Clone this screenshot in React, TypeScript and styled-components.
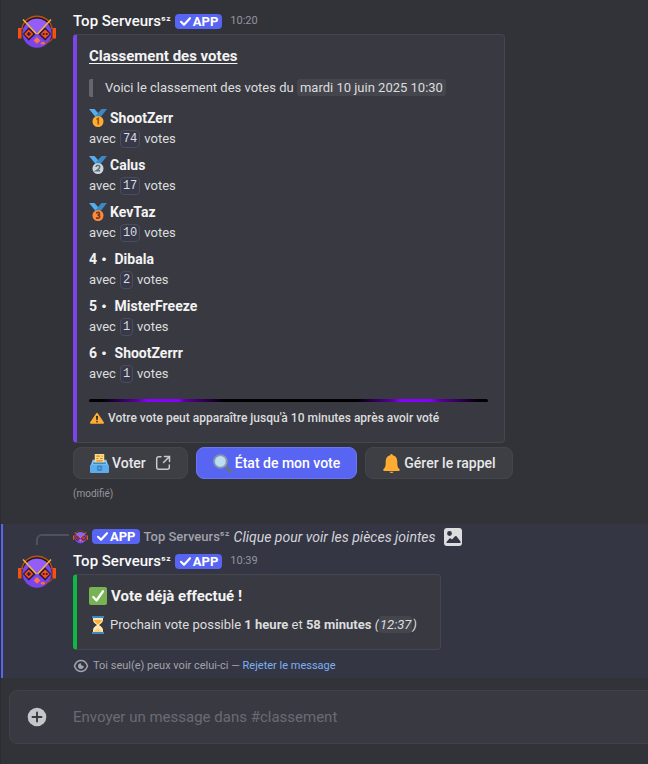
import React from "react";
import styled, { createGlobalStyle, css } from "styled-components";

const GlobalStyle = createGlobalStyle`
  * { box-sizing: border-box; }
  body {
    margin: 0;
    background: #323339;
    color: #dcddde;
    font-family: Roboto, Inter, "Noto Sans CJK JP", sans-serif;
    font-size: 13px;
    line-height: 20px;
  }
  svg { display: block; flex: none; }
`;

const Page = styled.main`
  min-height: 100vh;
  overflow: hidden;
  border-left: 1px solid #2b2c31;
  padding-bottom: 20px;
`;

const Message = styled.article<{ $mentioned?: boolean }>`
  display: grid;
  grid-template-columns: 72px minmax(0, 1fr);
  padding: 10px 16px 23px 0;
  ${(p) =>
    p.$mentioned &&
    css`
      padding: 4px 16px 4px 0;
      background: #343643;
      box-shadow: inset 2px 0 0 #5865f2;
    `}
`;

const AvatarSlot = styled.div`
  padding: 4px 0 0 17px;
`;

const ReplyRow = styled.div`
  grid-column: 1 / -1;
  display: flex;
  align-items: center;
  height: 17px;
  margin-bottom: 5px;
`;

const ReplySpine = styled.div`
  align-self: flex-end;
  width: 33px;
  height: 11px;
  margin: 0 4px 0 35px;
  border: solid #50515b;
  border-width: 2px 0 0 2px;
  border-top-left-radius: 6px;
`;

const ReplyName = styled.span`
  margin: 0 4px;
  color: #a2a3ab;
  font-size: 13px;
  font-weight: 500;
`;

const ReplyPreview = styled.button`
  display: flex;
  align-items: center;
  gap: 8px;
  padding: 0;
  border: 0;
  background: none;
  color: #d3d4da;
  font: italic 14px/18px Roboto, sans-serif;
  cursor: pointer;
`;

const MessageHeader = styled.header`
  display: flex;
  align-items: center;
  height: 22px;
  margin-bottom: 2px;
`;

const Author = styled.span`
  color: #fbfbfb;
  font-size: 15px;
  font-weight: 500;
  line-height: 22px;
`;

const Suffix = styled.span`
  font-size: 12px;
  line-height: 1;
`;

const Badge = styled.span`
  display: inline-flex;
  align-items: center;
  gap: 1px;
  height: 15px;
  margin-left: 4px;
  padding: 0 4px;
  border-radius: 4px;
  background: #5865f2;
  color: #fff;
  font-size: 13px;
  font-weight: 700;
  line-height: 15px;
`;

const Stamp = styled.time`
  margin-left: 8px;
  color: #94959c;
  font-size: 11px;
`;

const Embed = styled.section<{ $accent: string; $width: number }>`
  max-width: ${(p) => p.$width}px;
  padding: 10px 16px 14px 12px;
  border: 1px solid #46474e;
  border-left: 4px solid ${(p) => p.$accent};
  border-radius: 4px;
  background: #393a41;
`;

const EmbedTitle = styled.h2<{ $underlined?: boolean }>`
  display: flex;
  align-items: center;
  gap: 4px;
  margin: 0;
  color: #f3f3f4;
  font-size: 15px;
  font-weight: 700;
  line-height: 22px;
  text-decoration: ${(p) => (p.$underlined ? "underline" : "none")};
  text-underline-offset: 2px;
`;

const Quote = styled.blockquote`
  margin: 12px 0 11px;
  padding-left: 12px;
  border-left: 4px solid #65666e;
  border-radius: 2px;
  line-height: 18px;
`;

const Timestamp = styled.time`
  padding: 1px 3px;
  border-radius: 3px;
  background: #45464d;
  i > & { padding: 1px; }
`;

const Ranking = styled.dl`
  display: grid;
  gap: 6px;
  margin: 0;
`;

const Player = styled.dt`
  display: flex;
  align-items: center;
  gap: 3px;
  height: 20px;
  color: #f3f3f4;
  font-size: 14px;
  font-weight: 700;
  white-space: pre;
`;

const Votes = styled.dd`
  display: flex;
  align-items: center;
  gap: 4px;
  height: 21px;
  margin: 0;
  font-size: 13px;
`;

const Count = styled.code`
  padding: 0 2px;
  border: 1px solid #4b4c5c;
  border-radius: 4px;
  background: #37384a;
  font: 12px/16px "Liberation Mono", monospace;
`;

const Separator = styled.div`
  height: 3px;
  margin-top: 15px;
  border-radius: 2px;
  background: linear-gradient(
    90deg,
    #000 3%, #5a009c 12%, #8800ff 14.5%, #8800ff 22.5%, #5a009c 24%, #000 34%,
    #000 67%, #5a009c 76%, #8800ff 78%, #8800ff 85.5%, #5a009c 88%, #000 98%
  );
`;

const EmbedFooter = styled.footer`
  display: flex;
  align-items: center;
  gap: 4px;
  margin: 8px 0 2px;
  padding-left: 1px;
  color: #dcddde;
  font-size: 12px;
  font-weight: 500;
  line-height: 16px;
`;

const Actions = styled.div`
  display: flex;
  flex-wrap: wrap;
  gap: 8px;
  margin-top: 4px;
`;

const action = css<{ $primary?: boolean }>`
  display: flex;
  align-items: center;
  gap: 3px;
  height: 32px;
  padding: 0 16px;
  border: 1px solid ${(p) => (p.$primary ? "#6a76f4" : "#45464c")};
  border-radius: 8px;
  background: ${(p) => (p.$primary ? "#5865f2" : "#3e3f45")};
  color: ${(p) => (p.$primary ? "#fff" : "#e8e8ea")};
  font: 500 14px/20px Roboto, sans-serif;
  text-decoration: none;
  cursor: pointer;
`;

const ActionButton = styled.button<{ $primary?: boolean }>`
  ${action}
`;

const ActionLink = styled.a<{ $primary?: boolean }>`
  ${action}
`;

const ActionLabel = styled.span`
  &:not(:last-child) { padding-right: 6px; }
`;

const Edited = styled.div`
  margin-top: 8px;
  color: #94959c;
  font-size: 10px;
  line-height: 14px;
`;

const Remaining = styled.p`
  display: flex;
  align-items: center;
  gap: 3px;
  margin: 8px 0 0;
`;

const Ephemeral = styled.p`
  display: flex;
  align-items: center;
  gap: 4px;
  margin: 8px 0 0;
  color: #a2a3ab;
  font-size: 11px;
  line-height: 16px;
`;

const Dismiss = styled.a`
  color: #7cb0f5;
  text-decoration: none;
`;

const Composer = styled.form`
  display: flex;
  align-items: center;
  height: 54px;
  margin: 12px -8px 0 8px;
  border: 1px solid #414249;
  border-radius: 8px;
  background: #393a41;
`;

const AttachButton = styled.button`
  display: flex;
  margin: 0 26px 0 17px;
  padding: 0;
  border: 0;
  background: none;
  cursor: pointer;
`;

const MessageInput = styled.input`
  flex: 1;
  min-width: 0;
  height: 100%;
  padding: 0;
  border: 0;
  outline: 0;
  background: none;
  color: #dcddde;
  font: 15px/22px Roboto, sans-serif;
  &::placeholder { color: #6a6b74; opacity: 1; }
`;

function Avatar({ width = 38, height = 35 }: { width?: number; height?: number }) {
  return (
    <svg width={width} height={height} viewBox="0 0 38 35" role="img" aria-label="Top Serveurs">
      <path d="M4 15C7-2 31-2 34 15" fill="none" stroke="#b9520f" strokeWidth="1.600" />
      <path d="M5.500 14C9 .500 29 .500 32.500 14" fill="none" stroke="#24170f" strokeWidth="1.400" />
      <circle cx="19" cy="19.300" r="14.500" fill="#7a46ec" />
      <path d="M8.500 9.300a14.500 14.500 0 0 1 21 0L19 20z" fill="#945cf8" />
      <path d="M10.800 13.300l7 6.700-7 6.700-6-6.700zM27.200 13.300l6 6.700-6 6.700-7-6.700z" fill="#2c1b48" />
      <path d="M0 14h3.500v10.500H0zM34.500 14H38v10.500h-3.500z" fill="#f9500f" />
      <path d="M5 5.500l13.500 14.500M33 5.500L19.500 20" stroke="#f2b632" strokeWidth="1.500" />
      <path d="M10.800 15.500l4.500 4.500-4.500 4.500-4.500-4.500zM27.200 15.500l4.500 4.500-4.500 4.500-4.500-4.500z" fill="#f4500f" />
      <path d="M10.800 18v4M8.800 20h4" stroke="#2c1b48" strokeWidth="1.500" />
      <circle cx="25.700" cy="20" r="1.100" fill="#2c1b48" />
      <circle cx="28.700" cy="20" r="1.100" fill="#2c1b48" />
      <path d="M19 23l3.400 3.400L19 29.800l-3.400-3.400z" fill="#ff6f4c" />
      <path d="M34.500 24.500q-3 4.500-8 4.500" fill="none" stroke="#a9481e" strokeWidth="1.200" />
      <rect x="22.800" y="28" width="4.200" height="2.400" rx="1.200" fill="#ff6a3c" />
    </svg>
  );
}

function Check() {
  return (
    <svg width="13" height="11" viewBox="0 0 13 11" aria-hidden="true">
      <path d="M2 5.800l3 3 6-6.600" fill="none" stroke="#fff" strokeWidth="2.100" strokeLinecap="round" strokeLinejoin="round" />
    </svg>
  );
}

function AppBadge() {
  return <Badge><Check />APP</Badge>;
}

const medalColors = [
  ["#ffac33", "#9e5200"],
  ["#ccd6dd", "#627077"],
  ["#ff8a3b", "#7c3b1a"],
];
const numerals = [
  "M15 21l3.500-2v12",
  "M14 22q.500-3.500 4-3.500t3.500 3.500-6.500 7.500h7",
  "M14 20q7-3 7 1.200 0 3-4 3 4.500 0 4.500 3.200 0 4-7.500 2.200",
];

function Medal({ rank }: { rank: number }) {
  const [disc, ink] = medalColors[rank - 1];
  return (
    <svg width="18" height="18" viewBox="0 0 36 36" aria-hidden="true">
      <path d="M18 8l-7-8H0l14 17 11.500-7.500z" fill="#55acee" />
      <path d="M25 0l-7 8-5 7 8 4L36 0z" fill="#3b88c3" />
      <circle cx="18" cy="25" r="11" fill={disc} />
      <path d={numerals[rank - 1]} fill="none" stroke={ink} strokeWidth="3.400" />
    </svg>
  );
}

function WarningIcon() {
  return (
    <svg width="14" height="12" viewBox="0 0 36 36" preserveAspectRatio="none" aria-hidden="true">
      <path d="M2.700 35C0 35-1 33 .500 31L16 4q2-3 4 0l15.500 27c1.500 2 .500 4-2.200 4z" fill="#ffac33" />
      <path d="M15.500 13q2.500-3 5 0L19.600 25h-3.200z" fill="#231f20" />
      <circle cx="18" cy="29" r="2.300" fill="#231f20" />
    </svg>
  );
}

function BallotIcon() {
  return (
    <svg width="19" height="19" viewBox="0 0 36 36" aria-hidden="true">
      <path d="M5 11h26l4 12H1z" fill="#8cc8f5" />
      <path d="M9 0h18v17H9z" fill="#ffd983" />
      <path d="M12 4h7m3 0h2M12 8.500h4m3 0h5M12 13h12" stroke="#d48a2c" strokeWidth="2" />
      <path d="M6 16h24v3H6z" fill="#3b88c3" />
      <rect y="20" width="36" height="16" rx="2" fill="#5dadec" />
      <rect x="13" y="22" width="10" height="10" rx="2" fill="#3b88c3" />
      <circle cx="18" cy="27" r="2" fill="#5dadec" />
    </svg>
  );
}

function ExternalIcon() {
  return (
    <svg width="16" height="16" viewBox="0 0 16 16" fill="none" stroke="#c8c9ce" strokeWidth="1.500" aria-hidden="true">
      <path d="M6 1.700H3.700a2 2 0 0 0-2 2v8.600a2 2 0 0 0 2 2h8.600a2 2 0 0 0 2-2V10M9.500 1.500h5v5M14 2L8.500 7.500" strokeLinecap="round" />
    </svg>
  );
}

function SearchIcon() {
  return (
    <svg width="19" height="19" viewBox="0 0 36 36" aria-hidden="true">
      <path d="M22 22l4 4" stroke="#9aaab4" strokeWidth="4" />
      <path d="M26 26l7 7" stroke="#66757f" strokeWidth="6" strokeLinecap="round" />
      <circle cx="14" cy="14" r="12" fill="#bbddf5" stroke="#8899a6" strokeWidth="3.500" />
    </svg>
  );
}

function BellIcon() {
  return (
    <svg width="19" height="19" viewBox="0 0 36 36" fill="#ffac33" aria-hidden="true">
      <path d="M18 0q2.500 0 3 3c6 1 8 6 8 13 0 8 1 9 4 12.500 1.500 2 .500 3.500-1.500 3.500h-27c-2 0-3-1.500-1.500-3.500C6 25 7 24 7 16 7 9 9 4 15 3q.500-3 3-3z" />
      <path d="M14 33.500h8q-1 2.500-4 2.500t-4-2.500z" />
    </svg>
  );
}

function TickEmoji() {
  return (
    <svg width="18" height="18" viewBox="0 0 36 36" aria-hidden="true">
      <rect width="36" height="36" rx="4" fill="#77b255" />
      <path d="M8.500 20l6.500 7L28 8.500" fill="none" stroke="#fff" strokeWidth="4.500" strokeLinecap="round" strokeLinejoin="round" />
    </svg>
  );
}

function Hourglass() {
  return (
    <svg width="18" height="18" viewBox="0 0 36 36" aria-hidden="true">
      <path d="M8 3h20v5q0 5-8 10 8 5 8 10v5H8v-5q0-5 8-10-8-5-8-10z" fill="#ffe8b6" />
      <path d="M10 8h16q-1 5-8 9-7-4-8-9z" fill="#ffac33" />
      <path d="M18 17v7q6 3 8 8H10q2-5 8-8z" fill="#ffd07a" />
      <path d="M6 0h24v4H6zM6 32h24v4H6z" fill="#3b88c3" />
    </svg>
  );
}

function AttachmentIcon() {
  return (
    <svg width="18" height="18" viewBox="0 0 18 18" aria-hidden="true">
      <rect width="18" height="18" rx="3" fill="#dcddde" />
      <circle cx="5.500" cy="5.500" r="2.400" fill="#343643" />
      <path d="M3 15q-1 0-.500-1l3-3.500q.700-.600 1.300 0l1.200 1 3-3.200q.800-.700 1.500 0l4 5.200q.500 1.500-.500 1.500z" fill="#343643" />
    </svg>
  );
}

function EyeIcon() {
  return (
    <svg width="16" height="14" viewBox="0 0 16 14" fill="none" aria-hidden="true">
      <path d="M1.500 7C4-.200 12-.200 14.500 7 12 14.200 4 14.200 1.500 7z" stroke="#a2a3ab" strokeWidth="1.500" />
      <path d="M8 4.200q-.400 2.600 2.800 2.800a2.900 2.900 0 1 1-2.800-2.800z" fill="#a2a3ab" />
    </svg>
  );
}

function PlusIcon() {
  return (
    <svg width="20" height="20" viewBox="0 0 20 20" aria-hidden="true">
      <circle cx="10" cy="10" r="9.300" fill="#c5c6ca" />
      <path d="M10 5.500v9M5.500 10h9" stroke="#393a41" strokeWidth="1.900" strokeLinecap="round" />
    </svg>
  );
}

const players = [
  { name: "ShootZerr", votes: 74 },
  { name: "Calus", votes: 17 },
  { name: "KevTaz", votes: 10 },
  { name: "Dibala", votes: 2 },
  { name: "MisterFreeze", votes: 1 },
  { name: "ShootZerrr", votes: 1 },
];

function BotName() {
  return <>Top Serveurs<Suffix>ˢᶻ</Suffix></>;
}

export default function App() {
  return (
    <>
      <GlobalStyle />
      <Page>
        <Message>
          <AvatarSlot><Avatar /></AvatarSlot>
          <div>
            <MessageHeader>
              <Author><BotName /></Author>
              <AppBadge />
              <Stamp>10:20</Stamp>
            </MessageHeader>
            <Embed $accent="#7b45ea" $width={432}>
              <EmbedTitle $underlined>Classement des votes</EmbedTitle>
              <Quote>
                Voici le classement des votes du <Timestamp>mardi 10 juin 2025 10:30</Timestamp>
              </Quote>
              <Ranking>
                {players.map((player, i) => (
                  <div key={player.name}>
                    <Player>
                      {i < 3 ? <><Medal rank={i + 1} />{player.name}</> : `${i + 1}・ ${player.name}`}
                    </Player>
                    <Votes>avec <Count>{player.votes}</Count> votes</Votes>
                  </div>
                ))}
              </Ranking>
              <Separator />
              <EmbedFooter>
                <WarningIcon />
                Votre vote peut apparaître jusqu'à 10 minutes après avoir voté
              </EmbedFooter>
            </Embed>
            <Actions>
              <ActionLink href="#voter">
                <BallotIcon />
                <ActionLabel>Voter</ActionLabel>
                <ExternalIcon />
              </ActionLink>
              <ActionButton type="button" $primary>
                <SearchIcon />
                <ActionLabel>État de mon vote</ActionLabel>
              </ActionButton>
              <ActionButton type="button">
                <BellIcon />
                <ActionLabel>Gérer le rappel</ActionLabel>
              </ActionButton>
            </Actions>
            <Edited>(modifié)</Edited>
          </div>
        </Message>

        <Message $mentioned>
          <ReplyRow>
            <ReplySpine />
            <Avatar width={15} height={14} />
            <AppBadge />
            <ReplyName><BotName /></ReplyName>
            <ReplyPreview type="button">
              Clique pour voir les pièces jointes
              <AttachmentIcon />
            </ReplyPreview>
          </ReplyRow>
          <AvatarSlot><Avatar /></AvatarSlot>
          <div>
            <MessageHeader>
              <Author><BotName /></Author>
              <AppBadge />
              <Stamp>10:39</Stamp>
            </MessageHeader>
            <Embed $accent="#0eb845" $width={368}>
              <EmbedTitle><TickEmoji />Vote déjà effectué !</EmbedTitle>
              <Remaining>
                <Hourglass />
                <span>
                  Prochain vote possible <b>1 heure</b> et <b>58 minutes</b> <i>(<Timestamp>12:37</Timestamp>)</i>
                </span>
              </Remaining>
            </Embed>
            <Ephemeral>
              <EyeIcon />
              <span>Toi seul(e) peux voir celui-ci — <Dismiss href="#rejeter">Rejeter le message</Dismiss></span>
            </Ephemeral>
          </div>
        </Message>

        <Composer>
          <AttachButton type="button" aria-label="Ajouter un fichier"><PlusIcon /></AttachButton>
          <MessageInput
            type="text"
            aria-label="Envoyer un message dans #classement"
            placeholder="Envoyer un message dans #classement"
          />
        </Composer>
      </Page>
    </>
  );
}
